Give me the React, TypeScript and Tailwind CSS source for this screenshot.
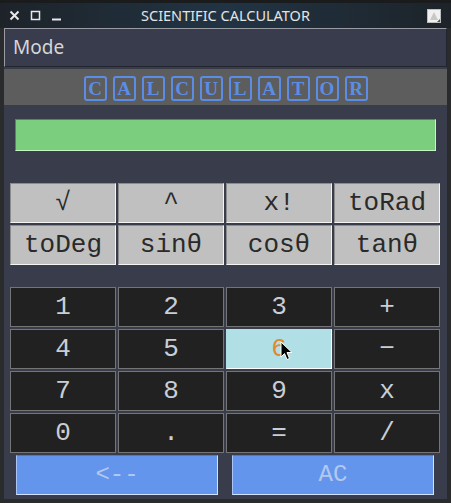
import React from 'react';

const sciKeys = ['√', '^', 'x!', 'toRad', 'toDeg', 'sinθ', 'cosθ', 'tanθ'];
const numKeys = ['1', '2', '3', '+', '4', '5', '6', '−', '7', '8', '9', 'x', '0', '.', '=', '/'];
const letters = ['C', 'A', 'L', 'C', 'U', 'L', 'A', 'T', 'O', 'R'];

const mono = { fontFamily: '"Liberation Mono", monospace' };

function Cursor() {
    return (
        <svg
            className="absolute left-[280px] top-[341px] pointer-events-none"
            width="14"
            height="21"
            viewBox="0 0 14 21"
        >
            <path
                d="M1 1 L1 16 L4.5 12.5 L7 18.5 L9.5 17.5 L7 11.5 L12 11.5 Z"
                fill="#000"
                stroke="#fff"
                strokeWidth="1"
                strokeLinejoin="round"
            />
        </svg>
    );
}

export default function App() {
    return (
        <div
            className="relative w-[451px] h-[503px] bg-[#2a2b2d] flex flex-col overflow-hidden"
            style={{ fontFamily: '"Noto Sans", sans-serif' }}
        >
            {/* Title bar */}
            <div className="h-[28px] shrink-0 border-t-[3px] border-[#1a1b1c] bg-gradient-to-r from-[#1d2329] via-[#213444] to-[#1d2329] flex items-center relative">
                <div className="flex items-center gap-[10px] pl-[9px] text-[#e6e6e6]">
                    <svg width="11" height="11" viewBox="0 0 11 11">
                        <path d="M1.5 1.5 L9.5 9.5 M9.5 1.5 L1.5 9.5" stroke="#e8e8e8" strokeWidth="2" />
                    </svg>
                    <svg width="11" height="11" viewBox="0 0 11 11">
                        <rect x="1.5" y="1.5" width="8" height="8" fill="none" stroke="#e8e8e8" strokeWidth="1.5" />
                    </svg>
                    <svg width="11" height="11" viewBox="0 0 11 11">
                        <path d="M1 9.5 L10 9.5" stroke="#e8e8e8" strokeWidth="2" />
                    </svg>
                </div>
                <div className="absolute inset-0 flex items-center justify-center text-[14.5px] text-[#e4e4e4]">
                    SCIENTIFIC CALCULATOR
                </div>
                <svg className="absolute right-[10px] top-[6px]" width="14" height="14" viewBox="0 0 14 14">
                    <rect x="0.5" y="0.5" width="13" height="13" fill="#f0f0f0" stroke="#bdbdbd" />
                    <path d="M7 3 L11 11 L3 11 Z" fill="#c8c8c8" />
                    <path d="M10 13 L13 10 L13 13 Z" fill="#555" />
                </svg>
            </div>

            {/* Content */}
            <div className="flex-1 mx-[4px] mb-[4px] bg-[#393c4b] flex flex-col">
                <div className="h-[39px] shrink-0 border border-t-[#9a9ca3] border-l-[#9a9ca3] border-b-[#23252e] border-r-[#23252e] bg-[#393c4d] flex items-center pl-[8px] text-[19px] text-[#d6d6d9]">
                    Mode
                </div>

                <div className="mt-[2px] h-[36px] shrink-0 bg-[#5d5d5d] flex justify-center items-start pt-[7px] gap-[6px]">
                    {letters.map((l, i) => (
                        <div
                            key={i}
                            className="w-[23px] h-[25px] border-2 border-[#5b8de6] rounded-[3px] flex items-center justify-center text-[19px] font-bold text-[#5b8de6] leading-none"
                            style={{ fontFamily: '"Liberation Serif", serif' }}
                        >
                            {l}
                        </div>
                    ))}
                </div>

                <div className="mt-[14px] mx-[11px] h-[32px] shrink-0 bg-[#7bce7d] border border-t-[#4f8a52] border-l-[#4f8a52] border-b-[#c4f5c4] border-r-[#c4f5c4]" />

                <div className="mt-[32px] ml-[6px] grid grid-cols-[repeat(4,106px)] gap-[2px]">
                    {sciKeys.map((k) => (
                        <div
                            key={k}
                            className="h-[40px] bg-[#c0c0c0] border border-t-[#8c8c8c] border-l-[#8c8c8c] border-b-[#f4f4f4] border-r-[#f4f4f4] flex items-center justify-center text-[26px] text-[#2a2a2a]"
                            style={mono}
                        >
                            {k}
                        </div>
                    ))}
                </div>

                <div className="mt-[22px] ml-[6px] grid grid-cols-[repeat(4,106px)] gap-[2px]">
                    {numKeys.map((k) =>
                        k === '6' ? (
                            <div
                                key={k}
                                className="h-[40px] bg-[#b0e0e6] border border-t-[#b0e0e6] border-l-[#b0e0e6] border-b-[#ffffff] border-r-[#ffffff] flex items-center justify-center text-[26px] text-[#e08a2c]"
                                style={mono}
                            >
                                {k}
                            </div>
                        ) : (
                            <div
                                key={k}
                                className="h-[40px] bg-[#212121] border border-[#747474] flex items-center justify-center text-[26px] text-[#c9ced6]"
                                style={mono}
                            >
                                {k}
                            </div>
                        )
                    )}
                </div>

                <div className="mt-[2px] ml-[12px] flex gap-[14px]">
                    {['<--', 'AC'].map((k) => (
                        <div
                            key={k}
                            className="w-[202px] h-[40px] bg-[#6495ed] border border-t-[#4d78c8] border-l-[#a9c4f5] border-b-[#d3e2fd] border-r-[#d3e2fd] flex items-center justify-center text-[24px] text-[#b4c8ee]"
                            style={mono}
                        >
                            {k}
                        </div>
                    ))}
                </div>
            </div>

            <Cursor />
        </div>
    );
}
